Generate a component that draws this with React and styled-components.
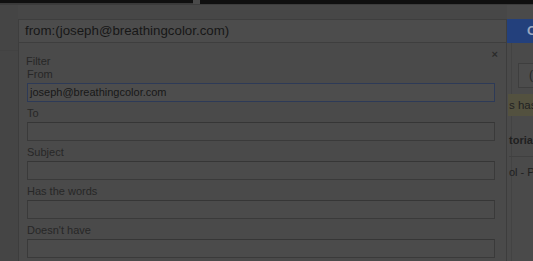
import React from "react";
import styled, { createGlobalStyle } from "styled-components";

const GlobalStyle = createGlobalStyle`
  html, body { margin: 0; padding: 0; background: #474747; }
  body { font-family: Arial, "Liberation Sans", sans-serif; }
  * { box-sizing: border-box; }
`;

const Page = styled.div`
  width: 533px;
  height: 261px;
  overflow: hidden;
  display: flex;
  flex-direction: column;
  background: #474747;
`;

const TopStrip = styled.div`
  height: 4px;
  display: flex;
  flex: none;
`;

const StripSeg = styled.div`
  width: ${(p) => (p.$w ? `${p.$w}px` : "auto")};
  flex: ${(p) => (p.$w ? "none" : "1")};
  background: ${(p) => p.$bg};
  border-bottom: 1px solid ${(p) => p.$line || p.$bg};
`;

const Body = styled.div`
  flex: 1;
  display: flex;
  min-height: 0;
`;

const Gutter = styled.div`
  width: 18px;
  flex: none;
  background: #454545;
  border-top: 1px solid #3c3c3c;
  display: flex;
  flex-direction: column;
`;

const GutterLine = styled.div`
  margin-top: 45px;
  height: 1px;
  background: #424242;
`;

const Main = styled.div`
  width: 489px;
  flex: none;
  display: flex;
  flex-direction: column;
  padding-top: 14px;
  border-top: 1px solid #3c3c3c;
`;

const SearchBox = styled.div`
  height: 24px;
  flex: none;
  border: 1px solid #3e3e3e;
  background: #4c4c4c;
  padding-left: 6px;
  font-size: 13.3px;
  line-height: 22px;
  color: #171717;
  white-space: nowrap;
`;

const Panel = styled.div`
  position: relative;
  flex: 1;
  background: #4a4a4a;
  border-left: 1px solid #3d3d3d;
  border-right: 1px solid #3d3d3d;
  padding: 12px 11px 0 8px;
  display: flex;
  flex-direction: column;
`;

const Close = styled.span`
  position: absolute;
  top: 6px;
  right: 8px;
  font-size: 11px;
  line-height: 11px;
  color: #2a2a2a;
  font-weight: bold;
`;

const Label = styled.div`
  font-size: 11px;
  line-height: 13px;
  height: 13px;
  color: #272727;
  margin-left: ${(p) => (p.$shift ? "-1px" : "0")};
`;

const Field = styled.div`
  display: flex;
  flex-direction: column;
  margin-bottom: 5px;
`;

const Input = styled.div`
  margin-top: 2px;
  height: 19px;
  width: 468px;
  border: 1px solid ${(p) => (p.$focus ? "#2d3a57" : "#3a3a3a")};
  border-top-color: ${(p) => (p.$focus ? "#2d3a57" : "#363636")};
  background: ${(p) => (p.$focus ? "#4d4d4d" : "#4b4b4b")};
  font-size: 11px;
  line-height: 17px;
  padding-left: 2px;
  color: #181818;
`;

const Right = styled.div`
  flex: 1;
  display: flex;
  flex-direction: column;
  padding-top: 14px;
  border-top: 1px solid #3c3c3c;
  background: #4a4a4a;
  overflow: hidden;
  white-space: nowrap;
`;

const BlueButton = styled.div`
  height: 24px;
  flex: none;
  background: #23407c;
  color: #9aa6bf;
  font-size: 13px;
  font-weight: bold;
  line-height: 24px;
  padding-left: 20px;
`;

const RightInner = styled.div`
  flex: 1;
  margin-left: 4px;
  border-left: 1px solid #434343;
  display: flex;
  flex-direction: column;
`;

const SmallBox = styled.div`
  margin: 20px 0 0 6px;
  height: 25px;
  border: 1px solid #3e3e3e;
  border-right: none;
  background: #4c4c4c;
  font-size: 12px;
  line-height: 23px;
  padding-left: 10px;
  color: #262626;
`;

const YellowBand = styled.div`
  margin: 6px 0 0 -4px;
  height: 22px;
  background: #53513f;
  font-size: 11.5px;
  line-height: 22px;
  color: #222;
  padding-left: 1px;
`;

const RowText = styled.div`
  margin-left: -3px;
  font-size: 11px;
  font-weight: ${(p) => (p.$bold ? "bold" : "normal")};
  line-height: 14px;
  color: #1f1f1f;
  padding: ${(p) => p.$pad};
  border-bottom: ${(p) => (p.$line ? "1px solid #404040" : "none")};
`;

const fields = [
  { label: "From", value: "joseph@breathingcolor.com", focus: true },
  { label: "To" },
  { label: "Subject" },
  { label: "Has the words" },
  { label: "Doesn't have" },
];

export default function App() {
  return (
    <>
      <GlobalStyle />
      <Page>
        <TopStrip>
          <StripSeg $w={193} $bg="#101010" $line="#3a3a3a" />
          <StripSeg $w={7} $bg="#4a4a4a" />
          <StripSeg $bg="#0f0f0f" />
        </TopStrip>
        <Body>
          <Gutter>
            <GutterLine />
          </Gutter>
          <Main>
            <SearchBox>from:(joseph@breathingcolor.com)</SearchBox>
            <Panel>
              <Close>×</Close>
              <Label $shift>Filter</Label>
              {fields.map((f) => (
                <Field key={f.label}>
                  <Label>{f.label}</Label>
                  <Input $focus={f.focus}>{f.value || ""}</Input>
                </Field>
              ))}
            </Panel>
          </Main>
          <Right>
            <BlueButton>C</BlueButton>
            <RightInner>
              <SmallBox>(</SmallBox>
              <YellowBand>s has</YellowBand>
              <RowText $bold $pad="17px 0 9px 0" $line>
                torial
              </RowText>
              <RowText $pad="8px 0 0 0">ol - P</RowText>
            </RightInner>
          </Right>
        </Body>
      </Page>
    </>
  );
}
